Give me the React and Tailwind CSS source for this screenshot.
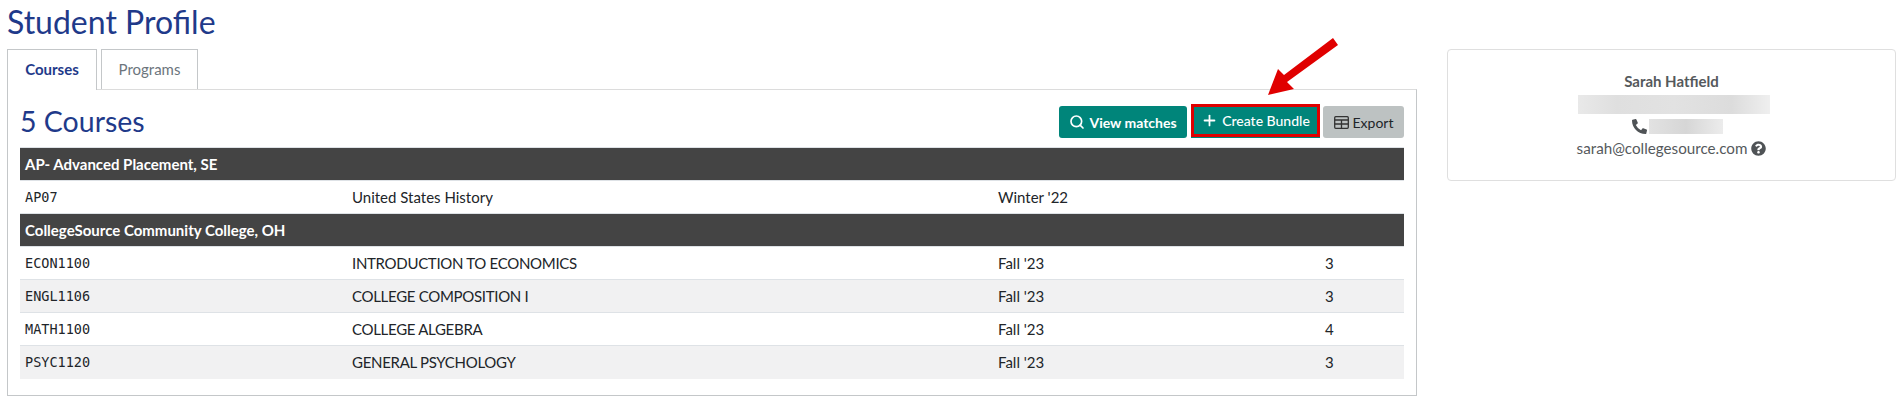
import React from "react";
import { Search, Plus } from "lucide-react";
import { FaPhoneAlt, FaQuestionCircle } from "react-icons/fa";

const sans = "font-['Lato','Liberation_Sans',sans-serif]";

function GroupRow({ children }) {
  return (
    <tr className="h-[33px] border-t border-[#dee2e6]">
      <td colSpan={4} className="bg-[#444444] px-[5px] text-[15px] font-bold leading-[20px] text-white">{children}</td>
    </tr>
  );
}

function CourseRow({ code, title, term, credits, shaded, upper }) {
  return (
    <tr className={`h-[33px] border-t border-[#dee2e6] text-[15px] leading-[20px] text-[#212529] ${shaded ? "bg-[#f1f1f2]" : "bg-white"}`}>
      <td className="px-[5px] font-['DejaVu_Sans_Mono',monospace] text-[13.5px] font-normal">{code}</td>
      <td className={`px-[5px] ${upper ? "tracking-[-0.3px]" : ""}`}>{title}</td>
      <td className="px-[5px]">{term}</td>
      <td className="px-[5px]">{credits}</td>
    </tr>
  );
}

export default function App() {
  return (
    <div className={`relative h-[415px] w-[1903px] overflow-hidden bg-white ${sans}`}>
      <h1 className="pl-[7px] pt-[3px] text-[32px] font-normal leading-[38px] text-[#1f3a8a]">Student Profile</h1>
      <div className="flex items-start pt-[8px]">
        <div className="ml-[7px] w-[1410px]">
          <div className="relative z-10 flex h-[40px] gap-[4px]">
            <div className="flex h-[41px] w-[90px] items-center justify-center border border-b-0 border-[#c4c7c9] bg-white pb-[2px] text-[15px] font-bold text-[#1f3a8a]">Courses</div>
            <div className="flex h-[40px] w-[97px] items-center justify-center border border-b-0 border-[#c4c7c9] bg-white pb-[1px] text-[15px] text-[#6c757d]">Programs</div>
          </div>
          <div className="h-[307px] border border-[#c4c7c9] border-t-[#dcdcdc] bg-white px-[12px] pt-[16px]">
            <div className="flex h-[41px] items-start justify-between">
              <h2 className="-mt-[2px] text-[28.5px] font-normal leading-[34px] text-[#1f3a8a]">5 Courses</h2>
              <div className="flex h-[32px] items-start gap-[3px] text-[14px]">
                <button className="mr-[1px] flex h-[32px] w-[128px] items-center justify-center gap-[4px] rounded-[3px] bg-[#00857a] font-bold text-white">
                  <Search size={16} strokeWidth={2.5} />View matches
                </button>
                <button className="-mt-[2px] flex h-[33px] w-[129px] items-center justify-center gap-[4px] border-[3px] border-[#e00000] bg-[#00857a] font-medium text-white shadow-[0_1px_0_0_#00857a]">
                  <Plus size={17} strokeWidth={2.5} />Create Bundle
                </button>
                <button className="flex h-[32px] w-[81px] items-center justify-center gap-[4px] rounded-[3px] bg-[#bdc2c2] text-[#212529]">
                  <svg width="15" height="13" viewBox="0 0 15 13" fill="none" stroke="#333" strokeWidth="1.3"><rect x="0.7" y="0.7" width="13.6" height="11.6" rx="1" /><path d="M0.7 4h13.6M0.7 8h13.6M7.5 4v8.3" /></svg>
                  Export
                </button>
              </div>
            </div>
            <table className="w-[1384px] table-fixed border-collapse">
              <colgroup>
                <col className="w-[327px]" />
                <col className="w-[646px]" />
                <col className="w-[327px]" />
                <col className="w-[84px]" />
              </colgroup>
              <tbody>
                <GroupRow>AP- Advanced Placement, SE</GroupRow>
                <CourseRow code="AP07" title="United States History" term="Winter '22" credits="" />
                <GroupRow>CollegeSource Community College, OH</GroupRow>
                <CourseRow upper code="ECON1100" title="INTRODUCTION TO ECONOMICS" term="Fall '23" credits="3" />
                <CourseRow upper code="ENGL1106" title="COLLEGE COMPOSITION I" term="Fall '23" credits="3" shaded />
                <CourseRow upper code="MATH1100" title="COLLEGE ALGEBRA" term="Fall '23" credits="4" />
                <CourseRow upper code="PSYC1120" title="GENERAL PSYCHOLOGY" term="Fall '23" credits="3" shaded />
              </tbody>
            </table>
          </div>
        </div>
        <div className="ml-[30px] flex h-[132px] w-[449px] flex-col items-center rounded-[4px] border border-[#dfdfdf] bg-white pt-[20px] text-[15px] text-[#55595c]">
          <div className="h-[22px] font-bold leading-[22px]">Sarah Hatfield</div>
          <div className="ml-[5px] mt-[3px] h-[19px] w-[192px] bg-[linear-gradient(90deg,#e9e9e9,#dfdfdf_20%,#e2e2e2_50%,#dcdcdc_80%,#efefef)]"></div>
          <div className="ml-[12px] mt-[5px] flex h-[15px] items-center gap-[2px]">
            <FaPhoneAlt size={15} color="#4f5356" />
            <div className="h-[15px] w-[74px] bg-[linear-gradient(90deg,#e2e2e2,#d6d6d6_50%,#ececec)]"></div>
          </div>
          <div className="mt-[4px] flex items-center gap-[4px] text-[15.2px] leading-[20px]">
            sarah@collegesource.com
            <FaQuestionCircle size={15} color="#4f5356" />
          </div>
        </div>
      </div>
      <svg className="absolute left-[1262px] top-[34px]" width="78" height="66" viewBox="0 0 78 66" fill="#e00000">
        <path d="M71 4 L76 11 L25 48 L32 55 L6 61 L16 35 L22 41 Z" />
      </svg>
    </div>
  );
}
